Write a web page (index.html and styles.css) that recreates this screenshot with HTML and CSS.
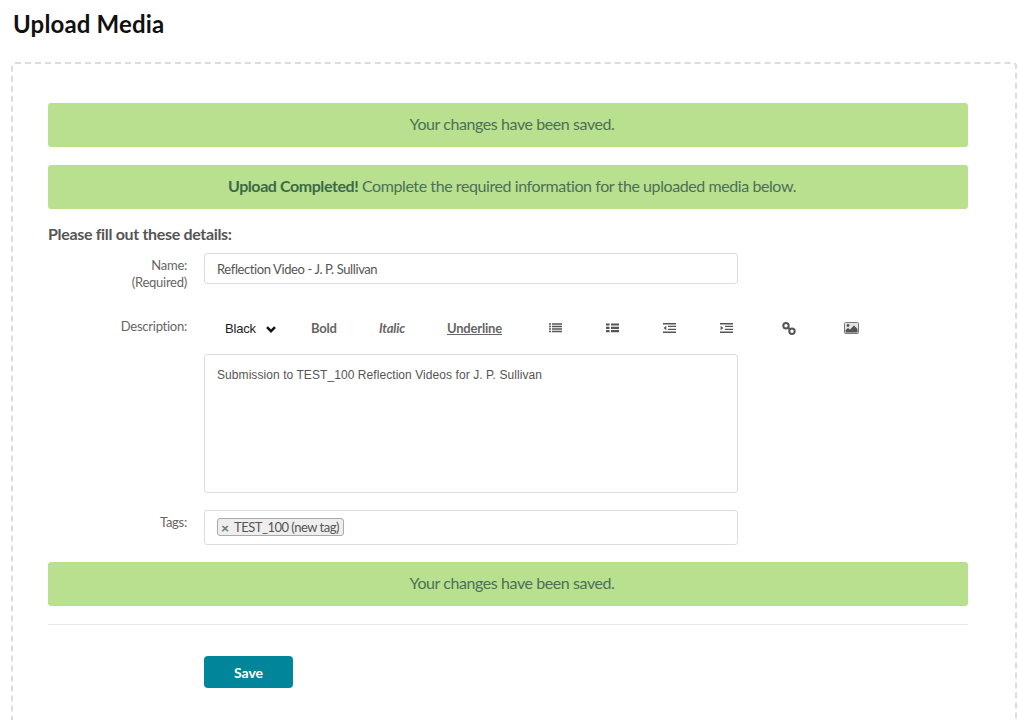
FILE: index.html
```html
<!DOCTYPE html>
<html lang="en">
<head>
<meta charset="utf-8">
<title>Upload Media</title>
<link rel="stylesheet" href="styles.css">
</head>
<body>
<h1 class="title">Upload Media</h1>
<main class="panel">
  <div class="alert">Your changes have been saved.</div>
  <div class="alert"><strong>Upload Completed!</strong> Complete the required information for the uploaded media below.</div>
  <h2 class="subtitle">Please fill out these details:</h2>
  <div class="row row-name">
    <div class="label">Name:<br>(Required)</div>
    <div class="input name-input">Reflection Video - J. P. Sullivan</div>
  </div>
  <div class="row row-desc">
    <div class="label">Description:</div>
    <div class="editor">
      <div class="toolbar">
        <span class="tool tool-color">Black
          <svg class="chev" width="10" height="7" viewBox="0 0 10 7"><path d="M1 1.200 5 5.200 9 1.200" fill="none" stroke="#111" stroke-width="2.400"/></svg>
        </span>
        <span class="tool tool-bold">Bold</span>
        <span class="tool tool-italic">Italic</span>
        <span class="tool tool-underline">Underline</span>
        <svg class="icon ic-ul" width="13" height="10" viewBox="0 0 13 10"><path d="M0 1h2M3 1h10M0 3.500h2M3 3.500h10M0 6h2M3 6h10M0 8.500h2M3 8.500h10" stroke="#555" stroke-width="1.300"/></svg>
        <svg class="icon ic-ol" width="13" height="10" viewBox="0 0 13 10"><path d="M0 1.500h3.500M5 1.500h8M0 4.800h3.500M5 4.800h8M0 8.200h3.500M5 8.200h8" stroke="#555" stroke-width="2.200"/></svg>
        <svg class="icon ic-out" width="13" height="10" viewBox="0 0 13 10"><path d="M0 .7h13M0 9.300h13M5 3.400h8M5 6.400h8" stroke="#555" stroke-width="1.400"/><path d="M3.300 2.800v4.400L.6 5z" fill="#555"/></svg>
        <svg class="icon ic-in" width="13" height="10" viewBox="0 0 13 10"><path d="M0 .7h13M0 9.300h13M5 3.400h8M5 6.400h8" stroke="#555" stroke-width="1.400"/><path d="M.6 2.800v4.400L3.300 5z" fill="#555"/></svg>
        <svg class="icon ic-link" width="14" height="13" viewBox="0 0 14 13"><g fill="none" stroke="#555" stroke-width="2"><circle cx="4" cy="3.800" r="2.700"/><circle cx="10" cy="9.200" r="2.700"/><path d="M6 5.600 8 7.400"/></g></svg>
        <svg class="icon ic-img" width="15" height="12" viewBox="0 0 15 12"><rect x=".5" y=".5" width="14" height="11" rx="1" fill="#e4e4e4" stroke="#777"/><circle cx="4" cy="3.500" r="1.400" fill="#555"/><path d="M1.500 10.500V8l2.500-2 2 1.500L10 3.500l3.500 3.500v3.500z" fill="#555"/></svg>
      </div>
      <div class="input desc-input">Submission to TEST_100 Reflection Videos for J. P. Sullivan</div>
    </div>
  </div>
  <div class="row row-tags">
    <div class="label">Tags:</div>
    <div class="input tags-input"><span class="tag"><span class="tag-x">×</span>TEST_100 (new tag)</span></div>
  </div>
  <div class="alert">Your changes have been saved.</div>
  <hr class="rule">
  <div class="actions"><button class="save" type="button">Save</button></div>
</main>
</body>
</html>
```
FILE: styles.css
```css
* { box-sizing: border-box; }
html, body { margin: 0; padding: 0; }
body {
  height: 720px;
  overflow: hidden;
  background: #fff;
  font-family: Lato, "Open Sans", sans-serif;
  color: #555;
}
.title {
  margin: 0;
  padding: 9px 0 0 13px;
  height: 62px;
  font-size: 24px;
  line-height: 30px;
  font-weight: 700;
  letter-spacing: .16px;
  color: #111;
}
.panel {
  margin-left: 11px;
  width: 1006px;
  height: 700px;
  padding: 39px 47px 0 35px;
  border: 2px dashed #ddd;
  border-radius: 4px;
}
.alert {
  height: 44px;
  margin-bottom: 18px;
  padding-left: 8px;
  background: #b9e08f;
  border-radius: 3px;
  text-align: center;
  font-size: 16px;
  line-height: 42px;
  letter-spacing: -.42px;
  color: #4b7055;
}
.alert strong { color: #3c6a46; }
.subtitle {
  margin: -3px 0 0;
  height: 29px;
  font-size: 16px;
  line-height: 20px;
  font-weight: 700;
  letter-spacing: -.33px;
  color: #555;
}
.row { display: flex; align-items: flex-start; }
.label {
  flex: none;
  width: 139px;
  margin-right: 17px;
  padding-top: 4px;
  text-align: right;
  font-size: 13px;
  line-height: 17px;
  letter-spacing: -.25px;
  color: #666;
}
.input {
  width: 534px;
  background: #fff;
  border: 1px solid #ddd;
  border-radius: 3px;
  font-size: 13px;
  color: #555;
}
.row-name { height: 57px; }
.name-input { height: 31px; padding-left: 12px; line-height: 30px; letter-spacing: -.4px; }
.row-desc { height: 200px; }
.row-desc .label { padding-top: 8px; }
.toolbar {
  display: flex;
  align-items: center;
  height: 36px;
  margin-bottom: 8px;
  width: 680px;
  font-size: 13px;
}
.tool { flex: none; white-space: nowrap; letter-spacing: -.2px; }
.tool-color { width: 86px; padding-left: 21px; color: #222; font-family: "Liberation Sans", sans-serif; }
.chev { margin-left: 7px; }
.tool-bold { width: 89px; padding-left: 21px; font-weight: 700; color: #666; }
.tool-italic { width: 68px; font-style: italic; font-weight: 700; color: #666; }
.tool-underline { width: 102px; font-weight: 700; color: #666; text-decoration: underline; }
.icon { flex: none; }
.ic-ul { margin-right: 44px; }
.ic-ol { margin-right: 44px; }
.ic-out { margin-right: 44px; }
.ic-in { margin-right: 49px; }
.ic-link { margin-right: 48px; }
.desc-input {
  height: 139px;
  padding: 13px 12px;
  font-family: "Liberation Sans", sans-serif;
  font-size: 12px;
  line-height: 15px;
  letter-spacing: .07px;
}
.row-tags { height: 52px; }
.tags-input { height: 35px; padding: 7px 12px; }
.tag {
  display: inline-flex;
  align-items: center;
  height: 18px;
  padding: 0 4px 0 3px;
  background: #eee;
  border: 1px solid #aaa;
  border-radius: 3px;
  font-size: 13px;
  letter-spacing: -.5px;
  color: #555;
}
.tag-x { width: 13px; font-weight: 900; color: #777; font-size: 14px; }
.rule { margin: 0; border: 0; border-top: 1px solid #e8e8e8; }
.actions { padding: 31px 0 0 156px; }
.save {
  display: block;
  width: 89px;
  height: 32px;
  padding: 0;
  background: #00859b;
  border: 0;
  border-radius: 4px;
  font-family: Lato, sans-serif;
  font-size: 14px;
  font-weight: 700;
  color: #fff;
}
```
